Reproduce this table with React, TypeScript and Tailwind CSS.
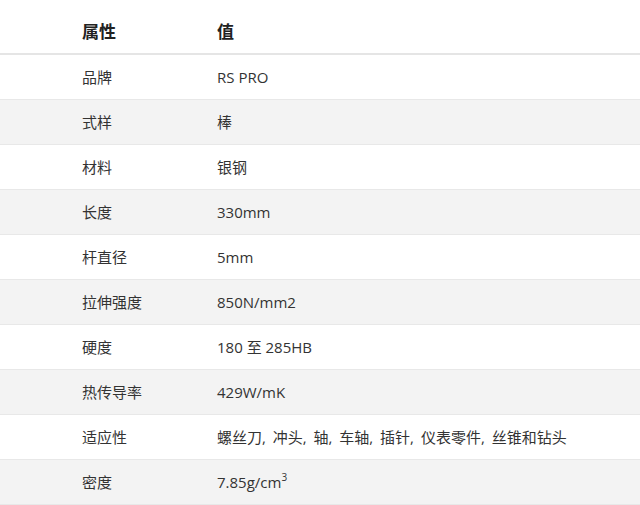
import React from "react";

const rows: [string, React.ReactNode][] = [
  ["品牌", "RS PRO"],
  ["式样", "棒"],
  ["材料", "银钢"],
  ["长度", "330mm"],
  ["杆直径", "5mm"],
  ["拉伸强度", "850N/mm2"],
  ["硬度", "180 至 285HB"],
  ["热传导率", "429W/mK"],
  [
    "适应性",
    <span className="[word-spacing:3px]">螺丝刀, 冲头, 轴, 车轴, 插针, 仪表零件, 丝锥和钻头</span>,
  ],
  [
    "密度",
    <>
      7.85g/cm<span className="text-[10px] align-top relative -top-[1px]">3</span>
    </>,
  ],
];

export default function App() {
  return (
    <div
      className="w-[640px] h-[505px] bg-white text-[#333] overflow-hidden"
      style={{ fontFamily: '"Open Sans", "Noto Sans CJK SC", sans-serif' }}
    >
      <div className="grid grid-cols-[217px_1fr] h-[55px] pt-[10px] items-center border-b-2 border-[#e5e5e5] font-bold text-[17px] text-[#222]">
        <div className="pl-[82px]">属性</div>
        <div>值</div>
      </div>
      {rows.map(([k, v], i) => (
        <div
          key={i}
          className={
            "grid grid-cols-[217px_1fr] h-[45px] items-center border-b border-[#e8e8e8] text-[15px] " +
            (i % 2 === 1 ? "bg-[#f3f3f3]" : "bg-white")
          }
        >
          <div className="pl-[82px]">{k}</div>
          <div>{v}</div>
        </div>
      ))}
    </div>
  );
}
